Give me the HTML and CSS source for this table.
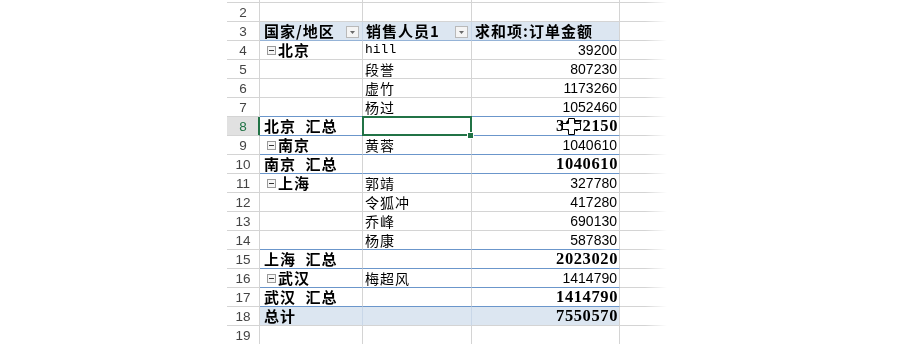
FILE: index.html
```html
<!DOCTYPE html>
<html lang="zh-CN">
<head>
<meta charset="utf-8">
<title>数据透视表</title>
<link rel="stylesheet" href="styles.css">
</head>
<body>
<div class="sheet">
  <div class="row first"><div class="rh"></div><div class="c"></div><div class="c"></div><div class="c"></div><div class="c d"></div></div>
  <div class="row"><div class="rh">2</div><div class="c"></div><div class="c"></div><div class="c"></div><div class="c d"></div></div>
  <div class="row"><div class="rh">3</div>
    <div class="c hd ca bold"><span>国家/地区</span><span class="dd"><svg width="13" height="12" viewBox="0 0 13 12"><rect x="0.5" y="0.5" width="12" height="11" fill="#f4f4f4" stroke="#b9b9b9"/><path d="M4 5h5l-2.5 3z" fill="#6a6a6a"/></svg></span></div>
    <div class="c hd cb bold"><span>销售人员1</span><span class="dd"><svg width="13" height="12" viewBox="0 0 13 12"><rect x="0.5" y="0.5" width="12" height="11" fill="#f4f4f4" stroke="#b9b9b9"/><path d="M4 5h5l-2.5 3z" fill="#6a6a6a"/></svg></span></div>
    <div class="c hd cc bold">求和项:订单金额</div>
    <div class="c d"></div></div>
  <div class="row"><div class="rh">4</div><div class="c ca bold"><span class="tg"><svg width="9" height="9" viewBox="0 0 9 9"><rect x="0.5" y="0.5" width="8" height="8" fill="#f6f6f6" stroke="#9a9a9a"/><path d="M2 4.5h5" stroke="#333" stroke-width="1"/></svg></span>北京</div><div class="c cb"><span class="mono">hill</span></div><div class="c cc num">39200</div><div class="c d"></div></div>
  <div class="row"><div class="rh">5</div><div class="c ca"></div><div class="c cb">段誉</div><div class="c cc num">807230</div><div class="c d"></div></div>
  <div class="row"><div class="rh">6</div><div class="c ca"></div><div class="c cb">虚竹</div><div class="c cc num">1173260</div><div class="c d"></div></div>
  <div class="row"><div class="rh">7</div><div class="c ca bl"></div><div class="c cb bl">杨过</div><div class="c cc num bl">1052460</div><div class="c d"></div></div>
  <div class="row"><div class="rh sel">8</div><div class="c ca bold bl sp">北京 汇总</div><div class="c cb bl active"><span class="handle"></span></div><div class="c cc num b bl">3072150<svg class="cursor" width="19" height="17" viewBox="0 0 19 17"><path d="M6.5 0.5h6v5h6v6h-6v5h-6v-5h-6v-6h6z" fill="#fff" stroke="#000"/></svg></div><div class="c d"></div></div>
  <div class="row"><div class="rh">9</div><div class="c ca bold bl"><span class="tg"><svg width="9" height="9" viewBox="0 0 9 9"><rect x="0.5" y="0.5" width="8" height="8" fill="#f6f6f6" stroke="#9a9a9a"/><path d="M2 4.5h5" stroke="#333" stroke-width="1"/></svg></span>南京</div><div class="c cb bl">黄蓉</div><div class="c cc num bl">1040610</div><div class="c d"></div></div>
  <div class="row"><div class="rh">10</div><div class="c ca bold bl sp">南京 汇总</div><div class="c cb bl"></div><div class="c cc num b bl">1040610</div><div class="c d"></div></div>
  <div class="row"><div class="rh">11</div><div class="c ca bold"><span class="tg"><svg width="9" height="9" viewBox="0 0 9 9"><rect x="0.5" y="0.5" width="8" height="8" fill="#f6f6f6" stroke="#9a9a9a"/><path d="M2 4.5h5" stroke="#333" stroke-width="1"/></svg></span>上海</div><div class="c cb">郭靖</div><div class="c cc num">327780</div><div class="c d"></div></div>
  <div class="row"><div class="rh">12</div><div class="c ca"></div><div class="c cb">令狐冲</div><div class="c cc num">417280</div><div class="c d"></div></div>
  <div class="row"><div class="rh">13</div><div class="c ca"></div><div class="c cb">乔峰</div><div class="c cc num">690130</div><div class="c d"></div></div>
  <div class="row"><div class="rh">14</div><div class="c ca bl"></div><div class="c cb bl">杨康</div><div class="c cc num bl">587830</div><div class="c d"></div></div>
  <div class="row"><div class="rh">15</div><div class="c ca bold bl sp">上海 汇总</div><div class="c cb bl"></div><div class="c cc num b bl">2023020</div><div class="c d"></div></div>
  <div class="row"><div class="rh">16</div><div class="c ca bold bl"><span class="tg"><svg width="9" height="9" viewBox="0 0 9 9"><rect x="0.5" y="0.5" width="8" height="8" fill="#f6f6f6" stroke="#9a9a9a"/><path d="M2 4.5h5" stroke="#333" stroke-width="1"/></svg></span>武汉</div><div class="c cb bl">梅超风</div><div class="c cc num bl">1414790</div><div class="c d"></div></div>
  <div class="row"><div class="rh">17</div><div class="c ca bold bl sp">武汉 汇总</div><div class="c cb bl"></div><div class="c cc num b bl">1414790</div><div class="c d"></div></div>
  <div class="row"><div class="rh">18</div><div class="c ca bold tot">总计</div><div class="c cb tot"></div><div class="c cc num b tot">7550570</div><div class="c d"></div></div>
  <div class="row"><div class="rh">19</div><div class="c ca"></div><div class="c cb"></div><div class="c cc"></div><div class="c d"></div></div>
</div>
</body>
</html>
```
FILE: styles.css
```css
html, body {
  margin: 0;
  padding: 0;
  background: #fff;
}
body {
  font-family: "Noto Sans CJK SC", "Liberation Sans", sans-serif;
  color: #000;
  overflow: hidden;
}
.sheet {
  margin-left: 227px;
  width: 440px;
  -webkit-mask-image: linear-gradient(to right, #000 calc(100% - 22px), transparent);
  mask-image: linear-gradient(to right, #000 calc(100% - 22px), transparent);
}
.row {
  display: grid;
  grid-template-columns: 33px 103px 109px 148px 47px;
  height: 19px;
}
.row.first {
  height: 3px;
}
.row > div {
  box-sizing: border-box;
  border-right: 1px solid #d4d4d4;
  border-bottom: 1px solid #d4d4d4;
  min-width: 0;
  white-space: nowrap;
}
.row > .d {
  border-right: none;
}
.rh {
  font-family: "Liberation Sans", sans-serif;
  font-size: 13.5px;
  color: #444;
  text-align: center;
  line-height: 16px;
  padding-top: 2px;
}
.rh.sel {
  background: #e1e1e1;
  color: #217346;
  border-right-color: #217346 !important;
  box-shadow: inset -1px 0 0 #217346;
}
.c {
  font-size: 14px;
  line-height: 18px;
  letter-spacing: 1px;
  display: flex;
  align-items: center;
}
.ca {
  padding-left: 4px;
}
.cb {
  padding-left: 2px;
}
.cc {
  padding-left: 3px;
}
.bold {
  font-weight: 700;
  font-size: 15px;
  letter-spacing: 1px;
}
.sp {
  word-spacing: 5px;
}
.hd {
  background: #dce6f1;
  border-right-color: #c9d7e8 !important;
  border-bottom-color: #95b3d7 !important;
  justify-content: space-between;
}
.hd.cb {
  padding-left: 3px;
}
.hd.cc {
  justify-content: flex-start;
  border-right-color: #d4d4d4 !important;
}
.dd {
  display: flex;
  margin-right: 3px;
  margin-top: 1px;
}
.tg {
  display: flex;
  margin: 1px 2px 0 3px;
}
.mono {
  font-family: "Liberation Mono", monospace;
  font-size: 13px;
  letter-spacing: 0;
}
.num {
  font-family: "Liberation Sans", sans-serif;
  font-size: 14px;
  letter-spacing: 0;
  justify-content: flex-end;
  padding-right: 2px;
  position: relative;
}
.num.b {
  font-family: "Liberation Serif", serif;
  font-weight: 700;
  font-size: 16.5px;
  letter-spacing: 0.6px;
  padding-right: 1px;
}
.bl {
  border-bottom-color: #6b96cb !important;
}
.tot {
  background: #dce6f1;
  border-right-color: #c9d7e8 !important;
}
.tot.cc {
  border-right-color: #d4d4d4 !important;
}
.active {
  position: relative;
}
.active::after {
  content: "";
  position: absolute;
  left: -1px;
  top: -1px;
  right: -1px;
  bottom: -1px;
  border: 2px solid #217346;
}
.handle {
  position: absolute;
  right: -3px;
  bottom: -4px;
  width: 5px;
  height: 5px;
  background: #217346;
  border: 1px solid #fff;
  z-index: 2;
}
.cursor {
  position: absolute;
  left: 90px;
  top: 1px;
}
```
